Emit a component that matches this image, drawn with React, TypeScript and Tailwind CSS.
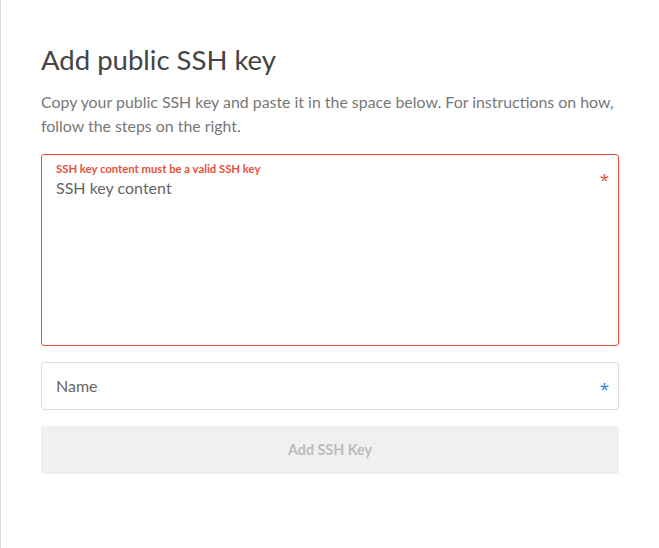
export default function App() {
  return (
    <div className="min-h-[548px] w-[659px] bg-white font-['Lato',sans-serif]">
      <div className="min-h-[548px] border-l border-[#dcdcdc] pl-10 pr-10 pt-[42px]">
        <h1 className="text-[27.5px] leading-9 text-[#444]">Add public SSH key</h1>
        <p className="mt-[12px] text-[15.9px] leading-6 text-[#777]">
          Copy your public SSH key and paste it in the space below. For instructions on how,
          follow the steps on the right.
        </p>

        <div className="relative mt-[16px] h-[192px] rounded-[3px] border border-[#e8503a] px-[14px] pt-[8px]">
          <div className="text-[11.3px] font-bold leading-3 text-[#e8503a]">
            SSH key content must be a valid SSH key
          </div>
          <div className="mt-[3px] text-[16px] leading-5 text-[#666]">SSH key content</div>
          <span className="absolute right-[9px] top-[13px] font-['Open_Sans',sans-serif] text-[17px] leading-6 text-[#e8503a]">
            *
          </span>
        </div>

        <div className="relative mt-4 flex h-12 items-center rounded-[3px] border border-[#dddddd] px-[14px]">
          <span className="text-[16px] text-[#666]">Name</span>
          <span className="absolute right-[9px] top-[14px] font-['Open_Sans',sans-serif] text-[17px] leading-6 text-[#2b7de9]">
            *
          </span>
        </div>

        <button
          type="button"
          className="mt-4 flex h-12 w-full items-center justify-center rounded-[3px] bg-[#f0f0f0] text-[14.3px] font-bold text-[#bbb]"
        >
          Add SSH Key
        </button>
      </div>
    </div>
  );
}
